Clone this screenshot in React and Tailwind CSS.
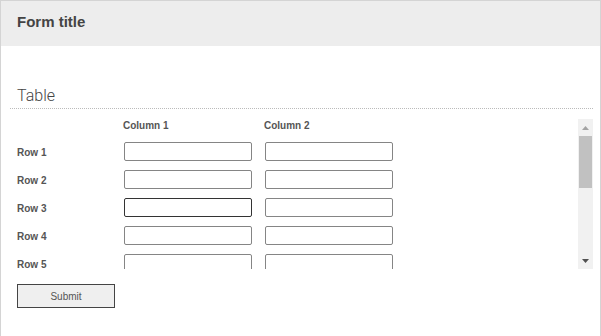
import React from 'react';

const rows = ['Row 1', 'Row 2', 'Row 3', 'Row 4', 'Row 5'];

const App = () => {
  return (
    <div className="w-[601px] h-[336px] bg-white border-l border-t border-r border-[#d4d4d4] font-['Liberation_Sans',Arial,sans-serif] overflow-hidden">
      <div className="h-[45px] bg-[#ededed] pl-[16px] pt-[12px]">
        <h1 className="text-[15px] leading-[18px] font-bold text-[#444]">Form title</h1>
      </div>
      <div className="pl-[9px] pr-[7px]">
        <div className="mt-[40px] border-b border-dotted border-[#bbb] pb-[2px] pl-[7px]">
          <h2 className="text-[16px] leading-[20px] font-['Roboto',sans-serif] font-light text-[#444]">Table</h2>
        </div>
        <div className="mt-[10px] h-[150px] flex">
          <div className="flex-1 overflow-hidden">
            <div className="grid grid-cols-[107px_141px_141px] pl-[7px]">
              <div className="h-[19px]"></div>
              <div className="h-[19px] text-[10px] leading-[14px] font-bold text-[#555] -ml-[1px]">Column 1</div>
              <div className="h-[19px] text-[10px] leading-[14px] font-bold text-[#555] -ml-[1px]">Column 2</div>
              {rows.map((r, i) => (
                <React.Fragment key={r}>
                  <div className="h-[28px] flex items-center text-[10px] font-bold text-[#555]">{r}</div>
                  <div className="h-[28px] pt-[4px]">
                    <input
                      type="text"
                      className={`block w-[128px] h-[19px] rounded-[2px] border ${i === 2 ? 'border-[#333]' : 'border-[#858585]'} bg-white outline-none`}
                    />
                  </div>
                  <div className="h-[28px] pt-[4px]">
                    <input
                      type="text"
                      className="block w-[128px] h-[19px] rounded-[2px] border border-[#858585] bg-white outline-none"
                    />
                  </div>
                </React.Fragment>
              ))}
            </div>
          </div>
          {/* scrollbar */}
          <div className="w-[15px] h-full bg-[#f1f1f1] flex flex-col items-center">
            <div className="h-[17px] w-full flex items-center justify-center">
              <svg width="7" height="4" viewBox="0 0 7 4"><path d="M3.5 0L7 4H0z" fill="#a3a3a3" /></svg>
            </div>
            <div className="w-[13px] h-[52px] bg-[#c1c1c1]"></div>
            <div className="flex-1"></div>
            <div className="h-[17px] w-full flex items-center justify-center">
              <svg width="7" height="4" viewBox="0 0 7 4"><path d="M0 0H7L3.5 4z" fill="#505050" /></svg>
            </div>
          </div>
        </div>
        <button className="mt-[15px] ml-[7px] w-[98px] h-[24px] bg-[#efefef] border border-[#444] text-[10px] text-[#555]">
          Submit
        </button>
      </div>
    </div>
  );
};

export default App;
